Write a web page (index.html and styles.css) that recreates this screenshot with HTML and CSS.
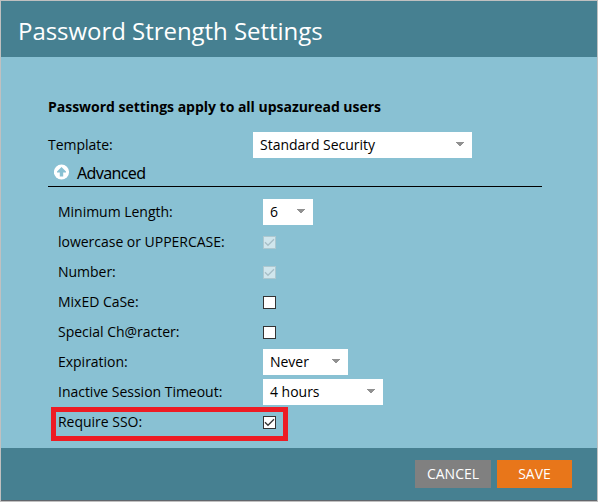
FILE: index.html
```html
<!DOCTYPE html>
<html lang="en">
<head>
<meta charset="utf-8">
<title>Password Strength Settings</title>
<link rel="stylesheet" href="styles.css">
</head>
<body>
<form class="dialog">
  <header class="header"><h1>Password Strength Settings</h1></header>
  <main class="content">
    <p class="intro">Password settings apply to all upsazuread users</p>
    <div class="template-row">
      <span class="template-label">Template:</span>
      <div class="select select-wide"><span>Standard Security</span><svg class="arrow" viewBox="0 0 8 4" shape-rendering="crispEdges"><path d="M0 0h8v1H7v1H6v1H5v1H3V3H2V2H1V1H0z"/></svg></div>
    </div>
    <div class="advanced">
      <svg class="up" viewBox="0 0 16 16"><circle cx="7.5" cy="8" r="7.6" fill="#fff"/><path d="M7.5 3 12 7.6v1H9.2V12.4H5.8V8.6H3v-1z" fill="#89c1d3"/></svg>
      <span class="advanced-text">Advanced</span>
    </div>
    <div class="fields">
      <div class="row"><span class="label">Minimum Length:</span><div class="select select-length"><span>6</span><svg class="arrow" viewBox="0 0 8 4" shape-rendering="crispEdges"><path d="M0 0h8v1H7v1H6v1H5v1H3V3H2V2H1V1H0z"/></svg></div></div>
      <div class="row"><span class="label">lowercase or UPPERCASE:</span><span class="check disabled"><svg viewBox="0 0 11 11"><path d="M1 5.3 4 8.3 10 2.3"/></svg></span></div>
      <div class="row"><span class="label">Number:</span><span class="check disabled"><svg viewBox="0 0 11 11"><path d="M1 5.3 4 8.3 10 2.3"/></svg></span></div>
      <div class="row"><span class="label">MixED CaSe:</span><span class="check"></span></div>
      <div class="row"><span class="label">Special Ch@racter:</span><span class="check"></span></div>
      <div class="row"><span class="label">Expiration:</span><div class="select select-expiry"><span>Never</span><svg class="arrow" viewBox="0 0 8 4" shape-rendering="crispEdges"><path d="M0 0h8v1H7v1H6v1H5v1H3V3H2V2H1V1H0z"/></svg></div></div>
      <div class="row"><span class="label">Inactive Session Timeout:</span><div class="select select-timeout"><span>4 hours</span><svg class="arrow" viewBox="0 0 8 4" shape-rendering="crispEdges"><path d="M0 0h8v1H7v1H6v1H5v1H3V3H2V2H1V1H0z"/></svg></div></div>
      <div class="row highlighted"><span class="label">Require SSO:</span><span class="check"><svg viewBox="0 0 11 11"><path d="M1 5.3 4 8.3 10 2.3"/></svg></span></div>
    </div>
  </main>
  <footer class="footer">
    <button type="button" class="button cancel">CANCEL</button>
    <button type="button" class="button save">SAVE</button>
  </footer>
</form>
</body>
</html>
```
FILE: styles.css
```css
*, *::after { box-sizing: border-box; }
body {
  margin: 0;
  font: 14px/20px "Open Sans", sans-serif;
  letter-spacing: -0.02px;
  color: #000;
}
.dialog {
  display: flex;
  flex-direction: column;
  width: 598px;
  height: 502px;
  border: 1px solid #c0c0c0;
  background: #89c1d3;
}
.header {
  height: 56px;
  padding: 13px 17px;
  background: #468091;
}
h1 {
  margin: 0;
  font-size: 24px;
  line-height: 34px;
  font-weight: 400;
  letter-spacing: -0.04px;
  color: #fff;
  white-space: nowrap;
}
.content {
  flex: 1;
  padding: 40px 55px 0 47px;
}
.intro {
  margin: 0 0 15px;
  font-weight: 700;
  white-space: nowrap;
}
.template-row {
  display: flex;
  align-items: center;
  height: 26px;
}
.template-label { width: 205px; }
.select {
  display: flex;
  align-items: center;
  justify-content: space-between;
  height: 26px;
  padding: 0 8px 0 7px;
  background: #fff;
}
.select-wide { width: 219px; }
.select-length { width: 50px; }
.select-expiry { width: 85px; }
.select-timeout { width: 120px; }
.arrow {
  width: 8px;
  height: 4px;
  margin-top: -2px;
  fill: #919191;
}
.advanced {
  display: flex;
  align-items: center;
  height: 29px;
  padding-left: 6px;
  gap: 7px;
  border-bottom: 1px solid #000;
}
.advanced-text {
  padding-top: 2px;
  font-family: "Noto Sans", sans-serif;
  font-size: 16px;
  letter-spacing: -0.65px;
}
.up {
  width: 16px;
  height: 16px;
  margin-top: -1px;
}
.fields { padding: 10px 0 0 10px; }
.row {
  position: relative;
  display: flex;
  align-items: center;
  height: 30px;
}
.label {
  width: 205px;
  white-space: nowrap;
}
.check {
  width: 13px;
  height: 13px;
  margin-top: 1px;
  border: 1px solid #333;
  background: #fff;
}
.check svg {
  display: block;
  width: 11px;
  height: 11px;
  fill: none;
  stroke: #333;
  stroke-width: 1.3;
}
.disabled {
  border-color: #adc8d0;
  background: #d0e6ed;
}
.disabled svg { stroke: #a6bec6; }
.highlighted::after {
  content: "";
  position: absolute;
  left: -7px;
  top: 0;
  width: 237px;
  height: 34px;
  border: 5px solid #ed1c24;
}
.footer {
  display: flex;
  justify-content: flex-end;
  gap: 6px;
  height: 53px;
  padding: 12px 25px 0 0;
  background: #468091;
  border-bottom: 1px solid #62666c;
}
.button {
  height: 28px;
  padding: 0;
  border: 0;
  font: 14px/28px "Open Sans", sans-serif;
  color: #fff;
}
.cancel {
  width: 76px;
  background: #808080;
}
.save {
  width: 75px;
  background: #e8761a;
}
```
